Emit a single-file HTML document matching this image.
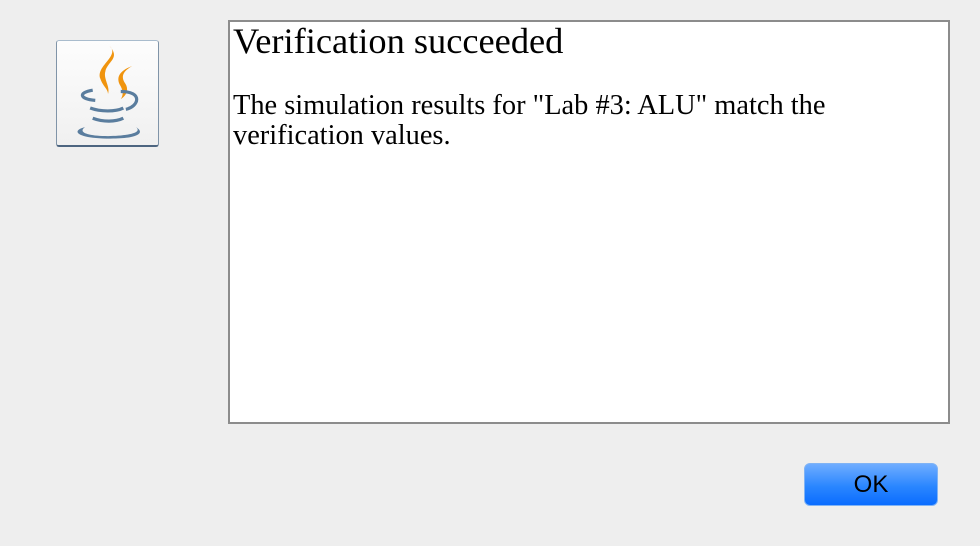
<!DOCTYPE html>
<html><head><meta charset="utf-8"><style>
html,body{margin:0;padding:0;width:980px;height:546px;background:#eeeeee;overflow:hidden;position:relative}
.icon{position:absolute;left:56px;top:40px;width:103px;height:107px;border:1px solid #a9bccd;border-bottom:2px solid #4d6580;border-right-color:#8094a8;border-left-color:#8094a8;border-radius:3px;background:linear-gradient(#fdfdfd,#f0f0f0);box-sizing:border-box}
.box{position:absolute;left:228px;top:20px;width:722px;height:404px;box-sizing:border-box;border:2px solid #8c8c8c;background:#fff;font-family:"Liberation Serif",serif;color:#000}
.t{position:absolute;left:3px;top:-1px;font-size:36.4px;line-height:40px;white-space:nowrap}
.b{position:absolute;left:3px;top:69px;font-size:28.4px;line-height:30px;width:710px;white-space:nowrap}
.ok{position:absolute;left:804px;top:463px;width:134px;height:43px;box-sizing:border-box;border:1px solid #7fb3f5;border-radius:6px;background:linear-gradient(#6fadff,#2a86ff 55%,#0a6cff);font-family:"Liberation Sans",sans-serif;font-size:24px;line-height:42px;text-align:center;color:#000}
</style></head><body>
<div class="icon">
<svg width="101" height="104" viewBox="0 0 99 102">
<g transform="translate(50 52) scale(1.25) translate(-50 -52)">
<path d="M51 14 C60 22,40 30,44 40 C46 46,50 48,50 52 C52 46,46 40,48 34 C50 26,60 24,51 14Z" fill="#f0940e"/>
<path d="M69 30 C58 34,56 40,60 46 C62 50,62 53,60 56 C66 52,66 47,63 43 C60 38,62 34,69 30Z" fill="#f0940e"/>
<path d="M38 49 C26 51,28 56,40 57" stroke="#5a7d9e" stroke-width="2.5" fill="none"/>
<path d="M60 50 C78 50,74 62,64 64" stroke="#5a7d9e" stroke-width="2.5" fill="none"/>
<path d="M36 63 C44 66,56 66,62 63" stroke="#5a7d9e" stroke-width="2.5" fill="none"/>
<path d="M38 71 C46 74,56 74,62 71" stroke="#5a7d9e" stroke-width="2.5" fill="none"/>
<path d="M32 78 C20 81,26 87,52 87 C72 87,80 83,72 78 C78 83,62 85,50 85 C34 85,26 82,32 78Z" fill="#5a7d9e"/>
</g>
</svg>
</div>
<div class="box"><div class="t">Verification succeeded</div>
<div class="b">The simulation results for "Lab #3: ALU" match the<br>verification values.</div></div>
<div class="ok">OK</div>
</body></html>
